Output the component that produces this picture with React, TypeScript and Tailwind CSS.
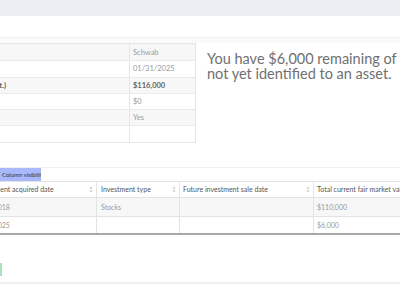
import React from "react";

const SortIcon = () => (
  <svg width="4" height="7" viewBox="0 0 4 7" className="shrink-0">
    <path d="M2 0.5 L3.6 2.8 L0.4 2.8 Z" fill="#c8c8c8" />
    <path d="M2 6.5 L3.6 4.2 L0.4 4.2 Z" fill="#c8c8c8" />
  </svg>
);

const topRows: { label: string; value: string; bold?: boolean }[] = [
  { label: "Custodian", value: "Schwab" },
  { label: "Date of statement", value: "01/31/2025" },
  { label: "Total investment (est.)", value: "$116,000", bold: true },
  { label: "Cash balance", value: "$0" },
  { label: "Retirement account", value: "Yes" },
  { label: "Notes", value: "" },
];

export default function App() {
  return (
    <div
      className="w-[400px] h-[284px] overflow-hidden bg-white relative flex flex-col"
      style={{ fontFamily: "Lato, 'Open Sans', sans-serif" }}
    >
      <div className="h-[16px] shrink-0 bg-[#eaedf2]" />
      <div className="h-[22px] shrink-0 bg-white border-b border-[#eef0f3]" />
      <div className="h-[5px] shrink-0 bg-[#fafafa]" />
      <div className="flex shrink-0">
        <div className="w-[196px] shrink-0 overflow-hidden">
          <div className="border border-[#e6e6e6] border-l-0">
            {topRows.map((r, i) => (
              <div
                key={i}
                className={`flex h-[16.3px] ${i % 2 === 0 ? "bg-[#f7f7f7]" : "bg-white"} ${i > 0 ? "border-t border-[#ebebeb]" : ""}`}
              >
                <div
                  className={`w-[130px] shrink-0 border-r border-[#e6e6e6] overflow-hidden flex items-center ${r.bold ? "justify-end pr-[123px]" : ""}`}
                >
                  <span
                    className={`whitespace-nowrap text-[7.5px] text-[#555] ${r.bold ? "font-bold" : "ml-[-118px]"}`}
                  >
                    {r.label}
                  </span>
                </div>
                <div
                  className={`flex-1 flex items-center pl-[3px] text-[7.5px] whitespace-nowrap ${r.bold ? "font-bold text-[#666]" : "text-[#9a9a9a]"}`}
                >
                  {r.value}
                </div>
              </div>
            ))}
          </div>
        </div>
        <div className="ml-[11px] mt-[8px] flex-1 overflow-hidden whitespace-nowrap text-[14.5px] leading-[15px] text-[#707070]">
          <div>You have $6,000 remaining of your investment</div>
          <div>not yet identified to an asset.</div>
        </div>
      </div>
      <div className="h-[24px] shrink-0" />
      <div className="shrink-0 border-t border-[#f0f0f0]">
        <div className="h-[13px] w-[41px] bg-[#a8b8fb] flex items-center pl-[2px] text-[6px] text-[#333] whitespace-nowrap overflow-hidden">
          Column visibility
        </div>
        <div className="border-b-2 border-[#a8a8a8]">
          <div className="flex h-[17px] bg-white border-t border-b border-[#e3e3e3] text-[7px] text-[#555]">
            <div className="w-[97px] shrink-0 border-r border-[#e3e3e3] flex items-center pr-[3px] overflow-hidden">
              <span className="flex-1 whitespace-nowrap ml-[-24px]">Investment acquired date</span>
              <SortIcon />
            </div>
            <div className="w-[83px] shrink-0 border-r border-[#e3e3e3] flex items-center pl-[4px] pr-[3px]">
              <span className="flex-1 whitespace-nowrap">Investment type</span>
              <SortIcon />
            </div>
            <div className="w-[134px] shrink-0 border-r border-[#e3e3e3] flex items-center pl-[3px] pr-[3px]">
              <span className="flex-1 whitespace-nowrap">Future investment sale date</span>
              <SortIcon />
            </div>
            <div className="flex-1 flex items-center pl-[3px] whitespace-nowrap overflow-hidden">
              Total current fair market value
            </div>
          </div>
          <div className="flex h-[19px] bg-[#f7f7f7] border-b border-[#e3e3e3] text-[7px] text-[#999]">
            <div className="w-[97px] shrink-0 border-r border-[#e3e3e3] flex items-center justify-start overflow-hidden">
              <span className="shrink-0 whitespace-nowrap ml-[-29px]">01/01/2018</span>
            </div>
            <div className="w-[83px] shrink-0 border-r border-[#e3e3e3] flex items-center pl-[4px]">Stocks</div>
            <div className="w-[134px] shrink-0 border-r border-[#e3e3e3]" />
            <div className="flex-1 flex items-center pl-[3px]">$110,000</div>
          </div>
          <div className="flex h-[16px] bg-white text-[7px] text-[#999]">
            <div className="w-[97px] shrink-0 border-r border-[#e3e3e3] flex items-center justify-start overflow-hidden">
              <span className="shrink-0 whitespace-nowrap ml-[-29px]">01/01/2025</span>
            </div>
            <div className="w-[83px] shrink-0 border-r border-[#e3e3e3]" />
            <div className="w-[134px] shrink-0 border-r border-[#e3e3e3]" />
            <div className="flex-1 flex items-center pl-[3px]">$6,000</div>
          </div>
        </div>
      </div>
      <div className="h-[28px] shrink-0" />
      <div className="h-[13px] w-[2px] shrink-0 bg-[#a9e2bd]" />
      <div className="h-[6px] shrink-0" />
      <div className="flex-1 bg-[#eef0f4]" />
    </div>
  );
}
